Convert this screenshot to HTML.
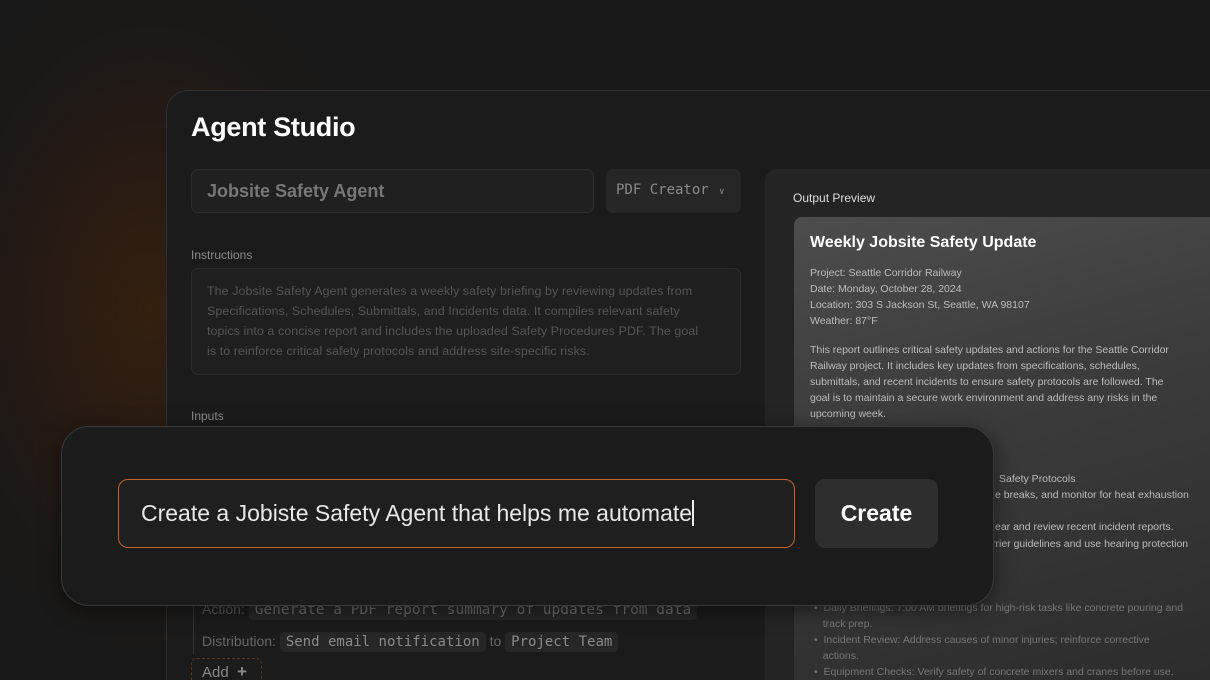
<!DOCTYPE html>
<html style="width:1210px;height:680px;overflow:hidden"><head><meta charset="utf-8"><style>
*{margin:0;padding:0;box-sizing:border-box}
body{width:1210px;height:680px;overflow:hidden;position:relative;font-family:"Liberation Sans",sans-serif;
background:radial-gradient(ellipse 240px 360px at 150px 310px,#33200f 0%,#271a14 45%,#1b1918 80%,#191919 100%),#191919;}
.abs{position:absolute}
.main{left:166px;top:90px;width:1044px;height:590px;background:#1b1b1b;border:1px solid #2e2e2e;border-right:none;border-bottom:none;border-radius:22px 0 0 0;}
.mono{font-family:"DejaVu Sans Mono","Liberation Mono",monospace}
.prev{left:765px;top:169px;width:445px;height:511px;background:#242424;border-radius:12px 0 0 0}
.card{left:794px;top:217px;width:416px;height:463px;border-radius:8px 0 0 0;background:linear-gradient(165deg,#4d4d4d 0%,#3c3c3c 40%,#2c2c2c 100%);}
.ct{color:#bdbdbd;font-size:10.5px;line-height:16px;position:absolute;white-space:nowrap}
.chip{background:#262626;border-radius:4px;padding:2px 6px;color:#8a8a8a}
</style></head><body>
<div class="abs main"></div>
<div class="abs" style="left:191px;top:112px;color:#fff;font-size:27px;font-weight:bold;letter-spacing:-0.3px">Agent Studio</div>
<div class="abs" style="left:191px;top:169px;width:403px;height:44px;background:#202020;border:1px solid #2c2c2c;border-radius:7px;color:#777;font-size:18px;font-weight:bold;padding:11px 15px">Jobsite Safety Agent</div>
<div class="abs mono" style="left:606px;top:169px;width:135px;height:44px;background:#262626;border-radius:7px;color:#8a8a8a;font-size:14px;padding:13px 10px">PDF Creator <span style="font-size:9px;margin-left:2px">&#8744;</span></div>
<div class="abs" style="left:191px;top:248px;color:#8c8c8c;font-size:12px">Instructions</div>
<div class="abs" style="left:191px;top:268px;width:550px;height:107px;background:#1f1f1f;border:1px solid #2a2a2a;border-radius:7px;color:#555;font-size:12.4px;line-height:20px;padding:12px 15px;letter-spacing:0.1px">The Jobsite Safety Agent generates a weekly safety briefing by reviewing updates from<br>Specifications, Schedules, Submittals, and Incidents data. It compiles relevant safety<br>topics into a concise report and includes the uploaded Safety Procedures PDF. The goal<br>is to reinforce critical safety protocols and address site-specific risks.</div>
<div class="abs" style="left:191px;top:409px;color:#8c8c8c;font-size:12px">Inputs</div>
<div class="abs" style="left:193px;top:590px;width:1px;height:64px;background:#333"></div>
<div class="abs" style="left:202px;top:601px;font-size:14px;color:#555;white-space:nowrap">Action: <span class="chip mono" style="color:#6a6a6a;font-size:14.5px">Generate a PDF report summary of updates from data</span></div>
<div class="abs" style="left:202px;top:633px;font-size:14px;color:#666;white-space:nowrap">Distribution: <span class="chip mono">Send email notification</span> to <span class="chip mono">Project Team</span></div>
<div class="abs" style="left:191px;top:658px;width:71px;height:22px;border:1px dashed #5a3322;border-bottom:none;border-radius:6px 6px 0 0;color:#888;font-size:15px;padding:3px 10px;overflow:hidden">Add &nbsp;<b style="font-size:17px">+</b></div>

<div class="abs prev"></div>
<div class="abs" style="left:793px;top:191px;color:#ddd;font-size:12px">Output Preview</div>
<div class="abs card"></div>
<div class="abs" style="left:810px;top:234px;color:#fff;font-size:16px;font-weight:bold">Weekly Jobsite Safety Update</div>
<div class="ct" style="left:810px;top:265px">Project: Seattle Corridor Railway<br>Date: Monday, October 28, 2024<br>Location: 303 S Jackson St, Seattle, WA 98107<br>Weather: 87°F</div>
<div class="ct" style="left:810px;top:342px">This report outlines critical safety updates and actions for the Seattle Corridor<br>Railway project. It includes key updates from specifications, schedules,<br>submittals, and recent incidents to ensure safety protocols are followed. The<br>goal is to maintain a secure work environment and address any risks in the<br>upcoming week.</div>
<div class="ct" style="left:999px;top:471px">Safety Protocols</div>
<div class="ct" style="left:995px;top:487px">e breaks, and monitor for heat exhaustion</div>
<div class="ct" style="left:995px;top:519px">ear and review recent incident reports.</div>
<div class="ct" style="left:992px;top:536px">rrier guidelines and use hearing protection</div>
<div class="ct" style="left:814px;top:600px;color:#777;height:80px;overflow:hidden">• &nbsp;Daily Briefings: 7:00 AM briefings for high-risk tasks like concrete pouring and<br>&nbsp;&nbsp;&nbsp;track prep.<br>• &nbsp;Incident Review: Address causes of minor injuries; reinforce corrective<br>&nbsp;&nbsp;&nbsp;actions.<br>• &nbsp;Equipment Checks: Verify safety of concrete mixers and cranes before use.</div>

<div class="abs" style="left:61px;top:426px;width:933px;height:180px;background:#1b1b1b;border:1px solid #3a3a3a;border-radius:28px;box-shadow:0 4px 20px rgba(0,0,0,.5)"></div>
<div class="abs" style="left:118px;top:479px;width:677px;height:69px;background:#1f1f1f;border:1.5px solid #c0622a;border-radius:10px;color:#e8e8e8;font-size:23px;padding:20px 22px;white-space:nowrap">Create a Jobiste Safety Agent that helps me automate<span style="display:inline-block;width:2px;height:26px;background:#eee;vertical-align:-5px"></span></div>
<div class="abs" style="left:815px;top:479px;width:123px;height:69px;background:#2e2e2e;border-radius:10px;color:#fff;font-size:23px;font-weight:bold;text-align:center;line-height:69px">Create</div>
</body></html>
